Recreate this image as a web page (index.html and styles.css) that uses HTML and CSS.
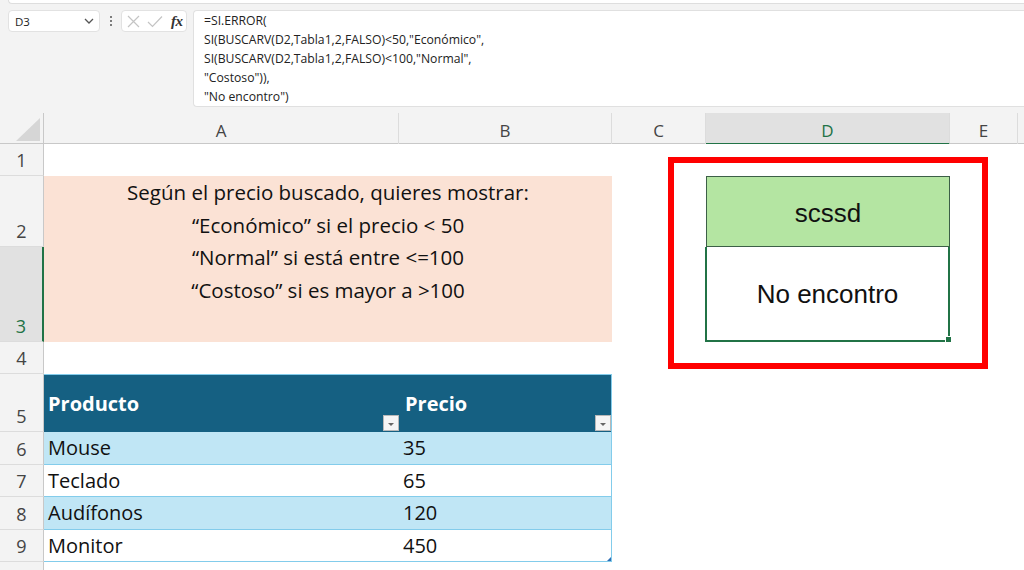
FILE: index.html
```html
<!DOCTYPE html>
<html lang="es">
<head>
<meta charset="utf-8">
<title>Excel - SI.ERROR</title>
<link rel="stylesheet" href="styles.css">
</head>
<body>
<div class="app">
  <div class="ribbon-edge"></div>
  <div class="formula-row">
    <div class="name-box">
      <span>D3</span>
      <svg class="chev" width="10" height="6" viewBox="0 0 10 6"><path d="M1 1 L5 5 L9 1" fill="none" stroke="#555" stroke-width="1.3"/></svg>
    </div>
    <div class="dots"><i></i><i></i><i></i></div>
    <div class="fx-buttons">
      <svg width="13" height="13" viewBox="0 0 13 13"><path d="M1 1 L12 12 M12 1 L1 12" stroke="#c4c4c4" stroke-width="1.2" fill="none"/></svg>
      <svg width="16" height="13" viewBox="0 0 16 13"><path d="M1 7 L5.5 11.5 L15 1.5" stroke="#c4c4c4" stroke-width="1.2" fill="none"/></svg>
      <span class="fx">fx</span>
    </div>
    <div class="formula-bar">
      <div>=SI.ERROR(</div>
      <div>SI(BUSCARV(D2,Tabla1,2,FALSO)&lt;50,"Económico",</div>
      <div>SI(BUSCARV(D2,Tabla1,2,FALSO)&lt;100,"Normal",</div>
      <div>"Costoso")),</div>
      <div>"No encontro")</div>
    </div>
  </div>

  <div class="sheet">
    <div class="col-heads">
      <div class="corner">
        <svg width="44" height="31" viewBox="0 0 44 31"><polygon points="40,5 40,28 16,28" fill="#d6d6d6"/></svg>
      </div>
      <div class="ch">A</div>
      <div class="ch">B</div>
      <div class="ch">C</div>
      <div class="ch sel">D</div>
      <div class="ch">E</div>
      <div class="ch last"></div>
    </div>

    <div class="body">
      <div class="rowheads">
        <div class="rh">1</div>
        <div class="rh">2</div>
        <div class="rh sel">3</div>
        <div class="rh">4</div>
        <div class="rh">5</div>
        <div class="rh">6</div>
        <div class="rh">7</div>
        <div class="rh">8</div>
        <div class="rh">9</div>
        <div class="rh"></div>
      </div>

      <div class="cells">
        <div class="intro">
          <div>Según el precio buscado, quieres mostrar:</div>
          <div>“Económico” si el precio &lt; 50</div>
          <div>“Normal” si está entre &lt;=100</div>
          <div>“Costoso” si es mayor a &gt;100</div>
        </div>

        <div class="d2">scssd</div>
        <div class="d3">No encontro</div>

        <div class="tbl">
          <div class="th"><span>Producto</span><b class="filter"></b></div>
          <div class="th th-b"><span>Precio</span><b class="filter"></b></div>
          <div class="td band">Mouse</div>
          <div class="td band td-b">35</div>
          <div class="td">Teclado</div>
          <div class="td td-b">65</div>
          <div class="td band">Audífonos</div>
          <div class="td band td-b">120</div>
          <div class="td">Monitor</div>
          <div class="td td-b">450</div>
        </div>
      </div>
    </div>
  </div>

  <div class="callout"></div>
</div>
</body>
</html>
```

FILE: styles.css
```css
:root {
  --rows: 32px 71px 95px 32px 58px 32.5px 32.5px 32.5px 32.5px 33px;
  --cols: 355px 213px 94px 244px 68px 1fr;
  --sel-green: #217346;
}

* {
  box-sizing: border-box;
  margin: 0;
  padding: 0;
}

html, body {
  width: 1024px;
  height: 570px;
  overflow: hidden;
}

body {
  background: #f3f3f3;
  font-family: "Open Sans", "Noto Sans", sans-serif;
  color: #222;
}

.app {
  position: relative;
  width: 1024px;
  height: 570px;
  overflow: hidden;
  background: #f3f3f3;
}

/* ribbon edge at top */
.ribbon-edge {
  height: 4px;
  margin-left: 8px;
  background: #fff;
  border-left: 1px solid #dedede;
  border-bottom: 1px solid #dedede;
  border-bottom-left-radius: 6px;
}

/* formula row */
.formula-row {
  display: flex;
  align-items: flex-start;
  height: 109px;
  padding: 6px 0 0 8px;
}

.name-box {
  width: 92px;
  height: 22px;
  background: #fff;
  border: 1px solid #e2e2e2;
  border-radius: 4px;
  display: flex;
  align-items: center;
  justify-content: space-between;
  padding: 0 5px 0 6px;
  font-size: 11.5px;
  color: #222;
}

.chev {
  display: block;
}

.dots {
  width: 21px;
  display: flex;
  flex-direction: column;
  align-items: center;
  gap: 2px;
  padding-top: 6px;
}

.dots i {
  display: block;
  width: 2px;
  height: 2px;
  border-radius: 1px;
  background: #555;
}

.fx-buttons {
  width: 66px;
  height: 22px;
  background: #fff;
  border: 1px solid #e2e2e2;
  border-radius: 4px;
  display: flex;
  align-items: center;
  gap: 7px;
  padding: 0 0 0 5px;
}

.fx {
  font-family: "Liberation Serif", "DejaVu Serif", serif;
  font-style: italic;
  font-weight: 700;
  font-size: 15px;
  color: #333;
  letter-spacing: -0.5px;
  margin-left: 1px;
}

.formula-bar {
  flex: 1;
  margin-left: 6px;
  height: 97px;
  background: #fff;
  border: 1px solid #e0e0e0;
  border-right: none;
  border-radius: 4px 0 0 4px;
  padding: 0 0 0 10px;
  font-size: 12.2px;
  line-height: 19px;
  color: #222;
  white-space: nowrap;
}

/* sheet */
.sheet {
  height: 457px;
  background: #fff;
  overflow: hidden;
}

.col-heads {
  display: grid;
  grid-template-columns: 44px var(--cols);
  height: 31px;
  background: #f3f3f3;
  border-bottom: 1px solid #c8c8c8;
}

.corner {
  border-right: 1px solid #c8c8c8;
}

.corner svg {
  display: block;
}

.ch {
  display: flex;
  align-items: center;
  justify-content: center;
  padding-top: 3px;
  font-size: 17px;
  color: #444;
  border-right: 1px solid #dcdcdc;
}

.ch.last {
  border-right: none;
}

.ch.sel {
  background: #e1e1e1;
  color: var(--sel-green);
  border-bottom: 2px solid var(--sel-green);
  margin-bottom: -1px;
  padding-top: 4px;
}

.body {
  display: flex;
  height: 426px;
  overflow: hidden;
}

.rowheads {
  width: 44px;
  flex: none;
  display: grid;
  grid-template-rows: var(--rows);
  background: #f3f3f3;
}

.rh {
  display: flex;
  align-items: flex-end;
  justify-content: center;
  font-size: 18px;
  line-height: 30px;
  color: #444;
  border-bottom: 1px solid #dcdcdc;
  border-right: 1px solid #c8c8c8;
}

.rh.sel {
  background: #e1e1e1;
  color: var(--sel-green);
  border-right: 2px solid var(--sel-green);
}

.cells {
  flex: 1;
  display: grid;
  grid-template-columns: var(--cols);
  grid-template-rows: var(--rows);
  background: #fff;
}

.intro {
  grid-column: 1 / 3;
  grid-row: 2 / 4;
  background: #fbe2d5;
  text-align: center;
  font-size: 20.5px;
  line-height: 32.5px;
  color: #111;
}

.d2,
.d3 {
  grid-column: 4;
  display: flex;
  align-items: center;
  justify-content: center;
  font-family: "Liberation Sans", Arial, sans-serif;
  font-size: 26px;
  color: #111;
}

.d2 {
  grid-row: 2;
  background: #b4e5a2;
  border: 1px solid #3c5f47;
  padding-top: 3px;
}

.d3 {
  grid-row: 3;
  position: relative;
  border: 2px solid var(--sel-green);
  border-top: none;
  margin-left: -1px;
  padding-top: 2px;
}

.d3::after {
  content: "";
  position: absolute;
  right: -4px;
  bottom: -3px;
  width: 5px;
  height: 5px;
  background: var(--sel-green);
  border: 1px solid #fff;
}

/* table */
.tbl {
  grid-column: 1 / 3;
  grid-row: 5 / 10;
  position: relative;
  display: grid;
  grid-template-columns: 355px 1fr;
  grid-template-rows: 57px repeat(4, 1fr);
  border-top: 1px solid #83cceb;
  border-right: 1px solid #83cceb;
}

.tbl::after {
  content: "";
  position: absolute;
  right: 0;
  bottom: 1px;
  width: 0;
  height: 0;
  border-left: 4px solid transparent;
  border-bottom: 4px solid #2f6fb5;
}

.th {
  display: flex;
  align-items: center;
  padding-left: 4px;
  background: #156082;
  color: #fff;
  font-weight: 700;
  font-size: 20px;
}

.th span {
  flex: 1;
}

.th-b,
.td-b {
  padding-left: 6px;
}

.filter {
  align-self: flex-end;
  width: 16px;
  height: 16px;
  margin-bottom: 1px;
  background: #f5f5f5;
  border: 1px solid #b8b8b8;
  display: flex;
  align-items: center;
  justify-content: center;
  padding-top: 2px;
}

.filter::before {
  content: "";
  width: 0;
  height: 0;
  border-left: 3px solid transparent;
  border-right: 3px solid transparent;
  border-top: 3px solid #666;
}

.td {
  display: flex;
  align-items: center;
  padding-left: 4px;
  font-size: 20px;
  color: #111;
  border-bottom: 1px solid #83cceb;
}

.band {
  background: #c0e6f5;
}

/* red annotation box */
.callout {
  position: absolute;
  left: 668px;
  top: 157px;
  width: 320px;
  height: 212px;
  border: 6px solid #ff0000;
}
```
